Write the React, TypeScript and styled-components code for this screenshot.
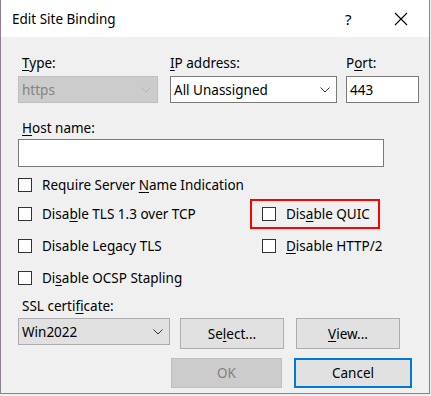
import React, { ReactElement } from 'react'
import styled, { createGlobalStyle, css } from 'styled-components'

const GlobalStyle = createGlobalStyle`
  html, body {
    margin: 0;
    padding: 0;
    background: #f0f0f0;
  }
  body {
    font-family: "Noto Sans", "Open Sans", sans-serif;
    font-size: 13.5px;
    color: #000;
  }
`

const Window = styled.div`
  width: 430px;
  height: 394px;
  box-sizing: border-box;
  border: 1px solid #8b7f90;
  border-top: 0;
  background: #f0f0f0;
  display: flex;
  flex-direction: column;
`

const TitleBar = styled.header`
  height: 37px;
  background: #fff;
  display: flex;
  align-items: center;
  padding-left: 11px;
  font-size: 13.5px;

  .title {
    flex: 1;
  }
  .help {
    width: 20px;
    margin-right: 29px;
    font-size: 15px;
  }
  .close {
    width: 14px;
    height: 14px;
    margin-right: 21px;
  }
`

const Body = styled.main`
  padding: 17px 17px 0 17px;
  display: flex;
  flex-direction: column;
`

const TopGrid = styled.div`
  display: grid;
  grid-template-columns: 140px 167px 70px;
  column-gap: 12px;
  row-gap: 4px;

  & > :nth-child(3n) {
    margin-left: -3px;
  }
`

const Label = styled.label<{ $indent?: number }>`
  display: block;
  height: 18px;
  line-height: 18px;
  padding-left: ${p => p.$indent ?? 0}px;
  white-space: nowrap;
`

const boxBase = css`
  box-sizing: border-box;
  height: 27px;
  display: flex;
  align-items: center;
  padding: 0 6px 0 3px;
  border: 1px solid #7a7a7a;
  background: #fff;
`

const Combo = styled.div<{ $variant?: 'disabled' | 'button' }>`
  ${boxBase}
  justify-content: space-between;
  ${p => p.$variant === 'disabled' && css`
    background: #cccccc;
    border-color: #bfbfbf;
    color: #838383;
  `}
  ${p => p.$variant === 'button' && css`
    background: #e1e1e1;
    border-color: #adadad;
  `}
`

const TextBox = styled.div<{ $width?: number; $height?: number }>`
  ${boxBase}
  height: ${p => p.$height ?? 27}px;
  ${p => p.$width && `width: ${p.$width}px;`}
`

const HostLabel = styled(Label)`
  margin-top: 16px;
  margin-bottom: 2px;
`

const Checks = styled.div`
  margin-top: 5px;
  display: grid;
  grid-template-columns: 232px 1fr;
  grid-template-rows: 26px 32px 32px 32px;
  align-items: center;

  & > :first-child {
    grid-column: 1 / 3;
  }
`

const Check = styled.div<{ $col2?: boolean; $highlight?: boolean }>`
  display: flex;
  align-items: center;
  gap: 10px;
  white-space: nowrap;
  box-sizing: border-box;
  ${p => p.$col2 && 'padding-left: 12px;'}
  ${p => p.$highlight && css`
    border: 2px solid #ff0000;
    padding-left: 10px;
    width: 130px;
    height: 30px;
  `}
`

const Box = styled.span`
  width: 14px;
  height: 14px;
  box-sizing: border-box;
  border: 1px solid #333;
  background: #fff;
  flex: none;
`

const SslLabel = styled(Label)`
  margin-top: 3px;
  margin-bottom: 3px;
`

const CertRow = styled.div`
  display: flex;
  align-items: flex-start;
`

const Button = styled.button<{ $width: number; $gap?: number; $variant?: 'disabled' | 'default' }>`
  width: ${p => p.$width}px;
  height: 31px;
  margin-left: ${p => p.$gap ?? 0}px;
  box-sizing: border-box;
  border: 1px solid #adadad;
  background: #e1e1e1;
  font: inherit;
  color: #000;
  padding: 0;
  ${p => p.$variant === 'disabled' && css`
    background: #cccccc;
    border-color: #bfbfbf;
    color: #838383;
  `}
  ${p => p.$variant === 'default' && css`
    border: 2px solid #0078d7;
  `}
`

const ActionRow = styled.div`
  display: flex;
  justify-content: flex-end;
  gap: 12px;
  margin-top: 9px;

  ${Button} {
    height: 30px;
  }
`

const Chevron = ({ color = '#333' }: { color?: string }) => (
  <svg width="10" height="6" viewBox="0 0 10 6">
    <path d="M0.5 0.5 L5 5 L9.5 0.5" fill="none" stroke={color} strokeWidth="1" />
  </svg>
)

const U = styled.u`
  text-decoration-thickness: 1px;
  text-underline-offset: 2px;
`

function App(): ReactElement {
  return (
    <>
      <GlobalStyle />
      <Window>
        <TitleBar>
          <span className="title">Edit Site Binding</span>
          <span className="help">?</span>
          <svg className="close" viewBox="0 0 14 14">
            <path d="M1 1 L13 13 M13 1 L1 13" stroke="#000" strokeWidth="1.1" />
          </svg>
        </TitleBar>
        <Body>
          <TopGrid>
            <Label $indent={4}><U>T</U>ype:</Label>
            <Label $indent={-2}><U>I</U>P address:</Label>
            <Label>P<U>o</U>rt:</Label>
            <Combo $variant="disabled">
              <span>https</span>
              <Chevron color="#b4b4b4" />
            </Combo>
            <Combo>
              <span>All Unassigned</span>
              <Chevron />
            </Combo>
            <TextBox>443</TextBox>
          </TopGrid>

          <HostLabel $indent={4}><U>H</U>ost name:</HostLabel>
          <TextBox $width={366} $height={28} />

          <Checks>
            <Check><Box /><span>Require Server <U>N</U>ame Indication</span></Check>
            <Check><Box /><span>Disa<U>b</U>le TLS 1.3 over TCP</span></Check>
            <Check $highlight><Box /><span>Dis<U>a</U>ble QUIC</span></Check>
            <Check><Box /><span>Disable Le<U>g</U>acy TLS</span></Check>
            <Check $col2><Box /><span><U>D</U>isable HTTP/2</span></Check>
            <Check><Box /><span>Di<U>s</U>able OCSP Stapling</span></Check>
          </Checks>

          <SslLabel $indent={4}>SSL certi<U>f</U>icate:</SslLabel>
          <CertRow>
            <Combo $variant="button" style={{ width: 152 }}>
              <span>Win2022</span>
              <Chevron />
            </Combo>
            <Button $width={104} $gap={10}>Se<U>l</U>ect...</Button>
            <Button $width={104} $gap={12}><U>V</U>iew...</Button>
          </CertRow>

          <ActionRow>
            <Button $width={111} $variant="disabled">OK</Button>
            <Button $width={118} $variant="default">Cancel</Button>
          </ActionRow>
        </Body>
      </Window>
    </>
  )
}

export default App
